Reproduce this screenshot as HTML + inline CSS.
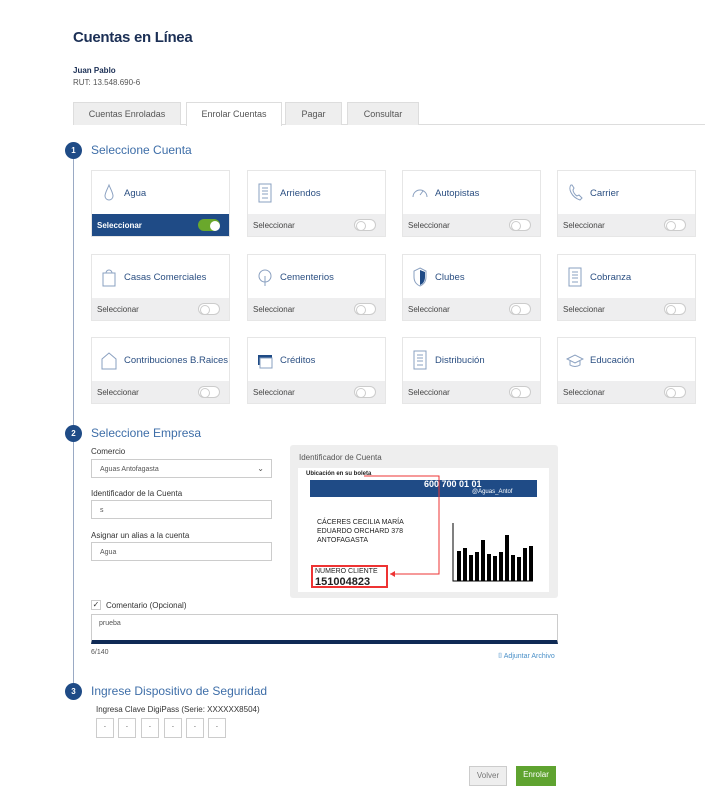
<!DOCTYPE html>
<html><head><meta charset="utf-8"><style>
*{box-sizing:border-box;margin:0;padding:0}
body{width:726px;height:783px;background:#fff;font-family:"Liberation Sans",sans-serif;position:relative;overflow:hidden;color:#333}
.a{position:absolute}
.tab{position:absolute;top:102px;height:23px;background:#eee;border:1px solid #ddd;border-bottom:none;font-size:9px;color:#555;text-align:center;line-height:22px}
.circ{position:absolute;left:65px;width:17px;height:17px;border-radius:50%;background:#1f4b86;color:#fff;font-size:8px;text-align:center;line-height:17px;font-weight:bold}
.h2{position:absolute;left:91px;font-size:12px;color:#3e6ea8}
.card{position:absolute;width:139px;height:67px;border:1px solid #e6e6e6;background:#fff}
.card .t{position:absolute;left:32px;top:17px;font-size:9.5px;color:#2b4f82}
.card .ic{position:absolute;left:8px;top:11px;width:18px;height:22px}
.card .b{position:absolute;left:0;right:0;bottom:0;height:22px;background:#eeeeef;font-size:8px;color:#444;padding:7px 0 0 5px}
.card .sw{position:absolute;right:9px;top:5px;width:22px;height:12px;border-radius:6px;border:1px solid #ccc;background:#fff}
.card .sw:after{content:"";position:absolute;left:1px;top:1px;width:8px;height:8px;border-radius:50%;border:1px solid #ccc;background:#fff}
.card.on .b{background:#1f4b86;color:#fff;font-weight:bold}
.card.on .sw{background:#6aa82c;border-color:#6aa82c}
.card.on .sw:after{left:11px;border-color:#fff}
.lbl{position:absolute;left:91px;font-size:8px;color:#333}
.inp{position:absolute;left:91px;width:181px;height:19px;border:1px solid #ccc;font-size:7px;color:#555;padding:6px 0 0 8px}
.dg{position:absolute;top:718px;width:18px;height:20px;border:1px solid #ccc;font-size:8px;text-align:center;line-height:16px}
</style></head><body>
<div class="a" style="left:73px;top:29px;font-size:15px;color:#1b2f55;font-weight:bold;letter-spacing:-0.3px">Cuentas en Línea</div>
<div class="a" style="left:73px;top:66px;font-size:8px;color:#1b2f55;font-weight:bold">Juan Pablo</div>
<div class="a" style="left:73px;top:78px;font-size:8px;color:#555">RUT: 13.548.690-6</div>
<div class="a" style="left:73px;top:124px;width:632px;height:1px;background:#ddd"></div>
<div class="tab" style="left:73px;width:108px">Cuentas Enroladas</div>
<div class="tab" style="left:186px;width:96px;background:#fff;height:24px">Enrolar Cuentas</div>
<div class="tab" style="left:285px;width:57px">Pagar</div>
<div class="tab" style="left:347px;width:72px">Consultar</div>
<div class="a" style="left:73px;top:150px;width:1px;height:541px;background:#9aaac4"></div>
<div class="circ" style="top:142px">1</div>
<div class="h2" style="top:143px">Seleccione Cuenta</div>
<div class="circ" style="top:425px">2</div>
<div class="h2" style="top:426px">Seleccione Empresa</div>
<div class="circ" style="top:683px">3</div>
<div class="h2" style="top:684px">Ingrese Dispositivo de Seguridad</div>

<div class="card on" style="left:91px;top:170px"><svg class="ic" viewBox="0 0 18 22"><path d="M9 3C7 8 5 11 5 14a4 4 0 0 0 8 0c0-3-2-6-4-11z" fill="none" stroke="#8aa0c0"/></svg><div class="t">Agua</div><div class="b">Seleccionar<div class="sw"></div></div></div>
<div class="card" style="left:247px;top:170px"><svg class="ic" viewBox="0 0 18 22"><rect x="3" y="2" width="12" height="18" fill="none" stroke="#8aa0c0"/><path d="M6 6h6M6 9h6M6 12h6M6 16h6" stroke="#8aa0c0"/></svg><div class="t">Arriendos</div><div class="b">Seleccionar<div class="sw"></div></div></div>
<div class="card" style="left:402px;top:170px"><svg class="ic" viewBox="0 0 18 22"><path d="M2 15a7 7 0 1 1 14 0M9 13l3-4" fill="none" stroke="#8aa0c0"/></svg><div class="t">Autopistas</div><div class="b">Seleccionar<div class="sw"></div></div></div>
<div class="card" style="left:557px;top:170px"><svg class="ic" viewBox="0 0 18 22"><path d="M5 3c-3 3 0 12 9 15l2-2-3-3-2 1c-2-1-4-4-4-6l1-2-2-3z" fill="none" stroke="#8aa0c0"/></svg><div class="t">Carrier</div><div class="b">Seleccionar<div class="sw"></div></div></div>

<div class="card" style="left:91px;top:254px"><svg class="ic" viewBox="0 0 18 22"><path d="M3 7h12v13H3zM6 7a3 3 0 0 1 6 0" fill="none" stroke="#8aa0c0"/></svg><div class="t">Casas Comerciales</div><div class="b">Seleccionar<div class="sw"></div></div></div>
<div class="card" style="left:247px;top:254px"><svg class="ic" viewBox="0 0 18 22"><circle cx="9" cy="10" r="6" fill="none" stroke="#8aa0c0"/><path d="M9 10v10" stroke="#8aa0c0"/></svg><div class="t">Cementerios</div><div class="b">Seleccionar<div class="sw"></div></div></div>
<div class="card" style="left:402px;top:254px"><svg class="ic" viewBox="0 0 18 22"><path d="M9 2l6 3v6c0 5-3 8-6 9-3-1-6-4-6-9V5z" fill="none" stroke="#8aa0c0"/><path d="M9 4l5 2v5c0 4-2 7-5 8z" fill="#1f4b86"/></svg><div class="t">Clubes</div><div class="b">Seleccionar<div class="sw"></div></div></div>
<div class="card" style="left:557px;top:254px"><svg class="ic" viewBox="0 0 18 22"><rect x="3" y="2" width="12" height="18" fill="none" stroke="#8aa0c0"/><path d="M6 6h6M6 9h6M6 12h6M6 16h6" stroke="#8aa0c0"/></svg><div class="t">Cobranza</div><div class="b">Seleccionar<div class="sw"></div></div></div>

<div class="card" style="left:91px;top:337px"><svg class="ic" viewBox="0 0 18 22"><path d="M2 10l7-6 7 6v10H2z" fill="none" stroke="#8aa0c0"/></svg><div class="t">Contribuciones B.Raices</div><div class="b">Seleccionar<div class="sw"></div></div></div>
<div class="card" style="left:247px;top:337px"><svg class="ic" viewBox="0 0 18 22"><rect x="2" y="6" width="14" height="10" fill="#1f4b86"/><rect x="4" y="9" width="12" height="10" fill="#fff" stroke="#8aa0c0"/></svg><div class="t">Créditos</div><div class="b">Seleccionar<div class="sw"></div></div></div>
<div class="card" style="left:402px;top:337px"><svg class="ic" viewBox="0 0 18 22"><rect x="3" y="2" width="12" height="18" fill="none" stroke="#8aa0c0"/><path d="M6 6h6M6 9h6M6 12h6M6 16h6" stroke="#8aa0c0"/></svg><div class="t">Distribución</div><div class="b">Seleccionar<div class="sw"></div></div></div>
<div class="card" style="left:557px;top:337px"><svg class="ic" viewBox="0 0 18 22"><path d="M1 10l8-4 8 4-8 4zM4 12v4c3 2 7 2 10 0v-4" fill="none" stroke="#8aa0c0"/></svg><div class="t">Educación</div><div class="b">Seleccionar<div class="sw"></div></div></div>

<div class="lbl" style="top:447px">Comercio</div>
<div class="inp" style="top:459px">Aguas Antofagasta<span style="position:absolute;right:7px;top:4px;font-size:8px">⌄</span></div>
<div class="lbl" style="top:489px">Identificador de la Cuenta</div>
<div class="inp" style="top:500px">s</div>
<div class="lbl" style="top:531px">Asignar un alias a la cuenta</div>
<div class="inp" style="top:542px">Agua</div>

<div class="a" style="left:290px;top:445px;width:268px;height:153px;background:#eee;border-radius:3px">
<div class="a" style="left:9px;top:8px;font-size:8px;color:#555">Identificador de Cuenta</div>
<div class="a" style="left:8px;top:23px;width:251px;height:124px;background:#fff">
<div class="a" style="left:8px;top:3px;font-size:6px;font-weight:bold;color:#222">Ubicación en su boleta</div>
<div class="a" style="left:12px;top:12px;width:227px;height:17px;background:#1f4b86"></div>
<div class="a" style="left:126px;top:11px;font-size:9px;font-weight:bold;color:#fff">600 700 01 01</div>
<div class="a" style="left:174px;top:21px;font-size:6px;color:#fff">@Aguas_Antof</div>
<div class="a" style="left:19px;top:50px;font-size:7px;line-height:9px;color:#222">CÁCERES CECILIA MARÍA<br>EDUARDO ORCHARD 378<br>ANTOFAGASTA</div>
<svg class="a" style="left:0;top:0" width="251" height="124"><path d="M66 8H141V106H92" fill="none" stroke="#e33"/><path d="M92 106l5-3v6z" fill="#e33"/></svg>
<div class="a" style="left:13px;top:97px;width:77px;height:23px;border:2px solid #e33;font-size:7px;padding:1px 2px;color:#222;line-height:8px">NUMERO CLIENTE<br><b style="font-size:11px;line-height:12px">151004823</b></div>
<svg class="a" style="left:150px;top:55px" width="85" height="65"><path d="M5 0v58h80" stroke="#000" fill="none"/><g fill="#000"><rect x="9" y="28" width="4" height="30"/><rect x="15" y="25" width="4" height="33"/><rect x="21" y="32" width="4" height="26"/><rect x="27" y="29" width="4" height="29"/><rect x="33" y="17" width="4" height="41"/><rect x="39" y="31" width="4" height="27"/><rect x="45" y="33" width="4" height="25"/><rect x="51" y="29" width="4" height="29"/><rect x="57" y="12" width="4" height="46"/><rect x="63" y="32" width="4" height="26"/><rect x="69" y="34" width="4" height="24"/><rect x="75" y="25" width="4" height="33"/><rect x="81" y="23" width="4" height="35"/></g></svg>
</div></div>

<div class="a" style="left:91px;top:600px;width:10px;height:10px;border:1px solid #ccc;font-size:8px;line-height:8px;text-align:center">✓</div>
<div class="lbl" style="left:106px;top:601px">Comentario (Opcional)</div>
<div class="a" style="left:91px;top:614px;width:467px;height:30px;border:1px solid #ccc;border-bottom:4px solid #0f2a55;font-size:7px;color:#555;padding:5px 7px">prueba</div>
<div class="a" style="left:91px;top:649px;font-size:7px;color:#555">6/140</div>
<div class="a" style="left:498px;top:653px;font-size:7px;color:#4a90c8">⌷ Adjuntar Archivo</div>
<div class="lbl" style="left:96px;top:705px">Ingresa Clave DigiPass (Serie: XXXXXX8504)</div>
<div class="dg" style="left:96px">·</div><div class="dg" style="left:118px">·</div><div class="dg" style="left:141px">·</div><div class="dg" style="left:164px">·</div><div class="dg" style="left:186px">·</div><div class="dg" style="left:208px">·</div>
<div class="a" style="left:469px;top:766px;width:38px;height:20px;background:#eee;border:1px solid #ccc;font-size:8px;color:#777;text-align:center;line-height:18px">Volver</div>
<div class="a" style="left:516px;top:766px;width:40px;height:20px;background:#5fa330;font-size:8px;color:#fff;text-align:center;line-height:18px">Enrolar</div>
</body></html>
